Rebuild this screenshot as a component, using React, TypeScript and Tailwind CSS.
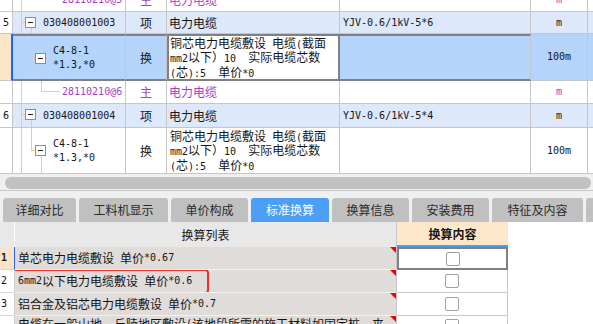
import type { ReactNode } from 'react'

const cell = 'shrink-0 border-r border-b border-[#c6c6c6] flex items-center'
const purple = 'text-[#a43fc3]'

// ASCII runs get a narrow monospace so they sit like the half-width glyphs of the original
function Mixed({ text }: { text: string }) {
  const parts = text.split(/([\x20-\x7e]+)/)
  return (
    <>
      {parts.map((p, i) =>
        i % 2 ? (
          <span key={i} className="font-['DejaVu_Sans_Mono'] text-[10px]">
            {p}
          </span>
        ) : (
          p
        )
      )}
    </>
  )
}

function MinusBox({ className }: { className: string }) {
  return (
    <div
      className={`absolute w-[11px] h-[11px] border border-[#8e8e8e] bg-white flex items-center justify-center ${className}`}
    >
      <div className="w-[5px] h-px bg-[#1f1f1f]" />
    </div>
  )
}

const DESC = ['铜芯电力电缆敷设 电缆(截面', 'mm2以下）10  实际电缆芯数', '(芯):5  单价*0']

function DescText() {
  return (
    <div className="whitespace-pre">
      {DESC.map((line) => (
        <div key={line} className="h-[14.5px] leading-[14.5px]">
          <Mixed text={line} />
        </div>
      ))}
    </div>
  )
}

function RedCorner() {
  return (
    <svg className="absolute top-0 right-0" width="6" height="6" viewBox="0 0 6 6">
      <polygon points="0,0 6,0 6,6" fill="#f00000" />
    </svg>
  )
}

function CheckBox() {
  return <div className="w-[14px] h-[14px] rounded-[2px] border border-[#a0a0a0] bg-white" />
}

const TABS = [
  { label: '详细对比', w: 'w-[73px]' },
  { label: '工料机显示', w: 'w-[89px]' },
  { label: '单价构成', w: 'w-[77px]' },
  { label: '标准换算', w: 'w-[78px]', active: true },
  { label: '换算信息', w: 'w-[77px]' },
  { label: '安装费用', w: 'w-[77px]' },
  { label: '特征及内容', w: 'w-[91px]' },
  { label: '', w: 'w-[20px]' },
]

function ListRow({
  num,
  text,
  children,
  first,
  tall,
}: {
  num: string
  text: string
  children?: ReactNode
  first?: boolean
  tall?: boolean
}) {
  return (
    <div className={`flex relative ${tall ? 'h-[40px]' : 'h-[23px]'}`}>
      <div
        className={`shrink-0 w-[15px] border-b border-[#d8d8d8] flex items-center pl-[1px] ${
          first ? 'bg-[#fde4c6] font-bold border-r border-r-[#2a66ee]' : 'bg-white border-r border-r-[#d0d0d0]'
        }`}
      >
        <Mixed text={num} />
      </div>
      <div
        className={`shrink-0 w-[382px] relative bg-[#e0dcd9] border-r border-b border-[#f2f2f2] border-r-[#c6c6c6] flex pl-[3px] whitespace-pre overflow-hidden ${
          tall ? 'items-start pt-[1px]' : 'items-center'
        }`}
      >
        <Mixed text={text} />
        {children}
        <RedCorner />
      </div>
      <div
        className={`shrink-0 w-[111px] bg-white flex justify-center ${
          first ? 'border-2 border-[#808080]' : 'border-r border-b border-[#c6c6c6]'
        } ${tall ? 'items-start pt-[3px]' : 'items-center'}`}
      >
        <CheckBox />
      </div>
    </div>
  )
}

export default function App() {
  return (
    <div className="w-[593px] h-[324px] overflow-hidden bg-white font-['Noto_Sans_CJK_SC',sans-serif] text-[12px] leading-[14px] text-[#151515]">
      {/* Top grid */}
      <div className="h-[174px] overflow-hidden">
        {/* partial material row */}
        <div className="flex h-[23px] -mt-[11px] bg-white">
          <div className={`${cell} w-[13px]`} />
          <div className={`${cell} w-[113px] relative pl-[49px] ${purple}`}>
            <div className="absolute left-[8px] top-0 bottom-0 w-px bg-[#f7c68d]" />
            <Mixed text="28110210@5" />
          </div>
          <div className={`${cell} w-[41px] justify-center ${purple}`}>主</div>
          <div className={`${cell} w-[173px] pl-[2px] ${purple}`}>电力电缆</div>
          <div className={`${cell} w-[191px]`} />
          <div className={`${cell} w-[57px] justify-center ${purple}`}>
            <Mixed text="m" />
          </div>
          <div className="flex-1 border-b border-[#c6c6c6]" />
        </div>

        {/* row 5 */}
        <div className="flex h-[22px] bg-[#dde8fb]">
          <div className={`${cell} w-[13px] bg-white pl-[3px]`}>
            <Mixed text="5" />
          </div>
          <div className={`${cell} w-[113px] relative pl-[30px]`}>
            <div className="absolute left-[8px] top-0 bottom-0 w-px bg-[#f7c68d]" />
            <div className="absolute left-[8px] top-[10px] w-[4px] h-px bg-[#f7c68d]" />
            <div className="absolute left-[18px] top-[16px] bottom-0 w-px bg-[#f7c68d]" />
            <MinusBox className="left-[12px] top-[5px]" />
            <Mixed text="030408001003" />
          </div>
          <div className={`${cell} w-[41px] justify-center`}>项</div>
          <div className={`${cell} w-[173px] pl-[2px]`}>电力电缆</div>
          <div className={`${cell} w-[191px] pl-[3px]`}>
            <Mixed text="YJV-0.6/1kV-5*6" />
          </div>
          <div className={`${cell} w-[57px] justify-center`}>
            <Mixed text="m" />
          </div>
          <div className="flex-1 border-b border-[#c6c6c6]" />
        </div>

        {/* selected row */}
        <div className="flex h-[47px] bg-[#b4d4fc]">
          <div className="shrink-0 w-[13px] bg-[#fde4c6] border-r-2 border-r-[#1565ff] border-b border-b-[#c6c6c6]" />
          <div className="shrink-0 w-[113px] relative border-y-2 border-r border-[#808080] border-r-[#c6c6c6] flex items-center pl-[40px]">
            <div className="absolute left-[8px] top-0 bottom-0 w-px bg-[#f7c68d]" />
            <div className="absolute left-[18px] top-0 h-[22px] w-px bg-[#f7c68d]" />
            <div className="absolute left-[18px] top-[22px] w-[4px] h-px bg-[#f7c68d]" />
            <div className="absolute left-[28px] top-[28px] bottom-0 w-px bg-[#f7c68d]" />
            <MinusBox className="left-[22px] top-[17px]" />
            <div className="font-['DejaVu_Sans_Mono'] text-[10px] leading-[14px]">
              <div>C4-8-1</div>
              <div>*1.3,*0</div>
            </div>
          </div>
          <div className="shrink-0 w-[41px] border-y-2 border-r border-[#808080] border-r-[#c6c6c6] flex items-center justify-center">
            换
          </div>
          <div className="shrink-0 w-[173px] bg-white border-2 border-[#808080] flex items-center pl-[1px]">
            <DescText />
          </div>
          <div className="shrink-0 w-[191px] border-y-2 border-r border-[#808080] border-r-[#c6c6c6]" />
          <div className={`${cell} w-[57px] justify-center`}>
            <Mixed text="100m" />
          </div>
          <div className="flex-1 border-b border-[#c6c6c6]" />
        </div>

        {/* material row */}
        <div className="flex h-[23px] bg-white">
          <div className={`${cell} w-[13px]`} />
          <div className={`${cell} w-[113px] relative pl-[49px] ${purple}`}>
            <div className="absolute left-[8px] top-0 bottom-0 w-px bg-[#f7c68d]" />
            <div className="absolute left-[28px] top-0 h-[10px] w-px bg-[#f7c68d]" />
            <div className="absolute left-[28px] top-[10px] w-[19px] h-px bg-[#f7c68d]" />
            <Mixed text="28110210@6" />
          </div>
          <div className={`${cell} w-[41px] justify-center ${purple}`}>主</div>
          <div className={`${cell} w-[173px] pl-[2px] ${purple}`}>电力电缆</div>
          <div className={`${cell} w-[191px]`} />
          <div className={`${cell} w-[57px] justify-center ${purple}`}>
            <Mixed text="m" />
          </div>
          <div className="flex-1 border-b border-[#c6c6c6]" />
        </div>

        {/* row 6 */}
        <div className="flex h-[24px] bg-[#dde8fb]">
          <div className={`${cell} w-[13px] bg-white pl-[3px]`}>
            <Mixed text="6" />
          </div>
          <div className={`${cell} w-[113px] relative pl-[30px]`}>
            <div className="absolute left-[8px] top-0 bottom-0 w-px bg-[#f7c68d]" />
            <div className="absolute left-[8px] top-[10px] w-[4px] h-px bg-[#f7c68d]" />
            <div className="absolute left-[18px] top-[16px] bottom-0 w-px bg-[#f7c68d]" />
            <MinusBox className="left-[12px] top-[5px]" />
            <Mixed text="030408001004" />
          </div>
          <div className={`${cell} w-[41px] justify-center`}>项</div>
          <div className={`${cell} w-[173px] pl-[2px]`}>电力电缆</div>
          <div className={`${cell} w-[191px] pl-[3px]`}>
            <Mixed text="YJV-0.6/1kV-5*4" />
          </div>
          <div className={`${cell} w-[57px] justify-center`}>
            <Mixed text="m" />
          </div>
          <div className="flex-1 border-b border-[#c6c6c6]" />
        </div>

        {/* row 6 child */}
        <div className="flex h-[46px] bg-white">
          <div className={`${cell} w-[13px]`} />
          <div className={`${cell} w-[113px] relative pl-[40px]`}>
            <div className="absolute left-[8px] top-0 bottom-0 w-px bg-[#f7c68d]" />
            <div className="absolute left-[18px] top-0 h-[22px] w-px bg-[#f7c68d]" />
            <div className="absolute left-[18px] top-[22px] w-[4px] h-px bg-[#f7c68d]" />
            <div className="absolute left-[28px] top-[28px] bottom-0 w-px bg-[#f7c68d]" />
            <MinusBox className="left-[22px] top-[17px]" />
            <div className="font-['DejaVu_Sans_Mono'] text-[10px] leading-[14px]">
              <div>C4-8-1</div>
              <div>*1.3,*0</div>
            </div>
          </div>
          <div className={`${cell} w-[41px] justify-center`}>换</div>
          <div className={`${cell} w-[173px] pl-[3px]`}>
            <DescText />
          </div>
          <div className={`${cell} w-[191px]`} />
          <div className={`${cell} w-[57px] justify-center`}>
            <Mixed text="100m" />
          </div>
          <div className="flex-1 border-b border-[#c6c6c6]" />
        </div>
      </div>

      {/* Horizontal scrollbar */}
      <div className="h-[16px] bg-[#f0f0f0] pt-[3px] pl-[5px] pr-[2px]">
        <div className="h-[12px] rounded-full bg-[#c1c1c1]" />
      </div>

      {/* Tabs */}
      <div className="h-[32px] bg-[#f0f0f0] border-t border-[#c9c9c9] flex items-end gap-[3px] pl-[3px]">
        {TABS.map((tab, i) => (
          <div
            key={i}
            className={`${tab.w} shrink-0 h-[24px] rounded-t-[3px] flex items-center justify-center ${
              tab.active ? 'bg-[#4d9ef6] text-white' : 'bg-[#c0c0c0] text-[#2a2a2a]'
            }`}
          >
            {tab.label}
          </div>
        ))}
      </div>

      {/* Bottom grid */}
      <div className="flex h-[25px]">
        <div className="shrink-0 w-[15px] bg-[#e8e8e8] border-r border-white" />
        <div className="shrink-0 w-[382px] bg-[#e8e8e8] border-r border-[#c6c6c6] flex items-center justify-center">
          换算列表
        </div>
        <div className="shrink-0 w-[111px] bg-[#fde7cb] border-b-2 border-[#4a9cf7] flex items-center justify-center font-bold">
          换算内容
        </div>
      </div>
      <ListRow num="1" text="单芯电力电缆敷设 单价*0.67" first />
      <ListRow num="2" text="6mm2以下电力电缆敷设 单价*0.6">
        <div className="absolute left-[-7px] top-[-1px] w-[201px] h-[25px] border-2 border-[#f2302b] rounded-[4px]" />
      </ListRow>
      <ListRow num="3" text="铝合金及铝芯电力电缆敷设 单价*0.7" />
      <ListRow num="4" text="电缆在一般山地、丘陵地区敷设(该地段所需的施工材料如固定桩、夹" tall />
    </div>
  )
}
